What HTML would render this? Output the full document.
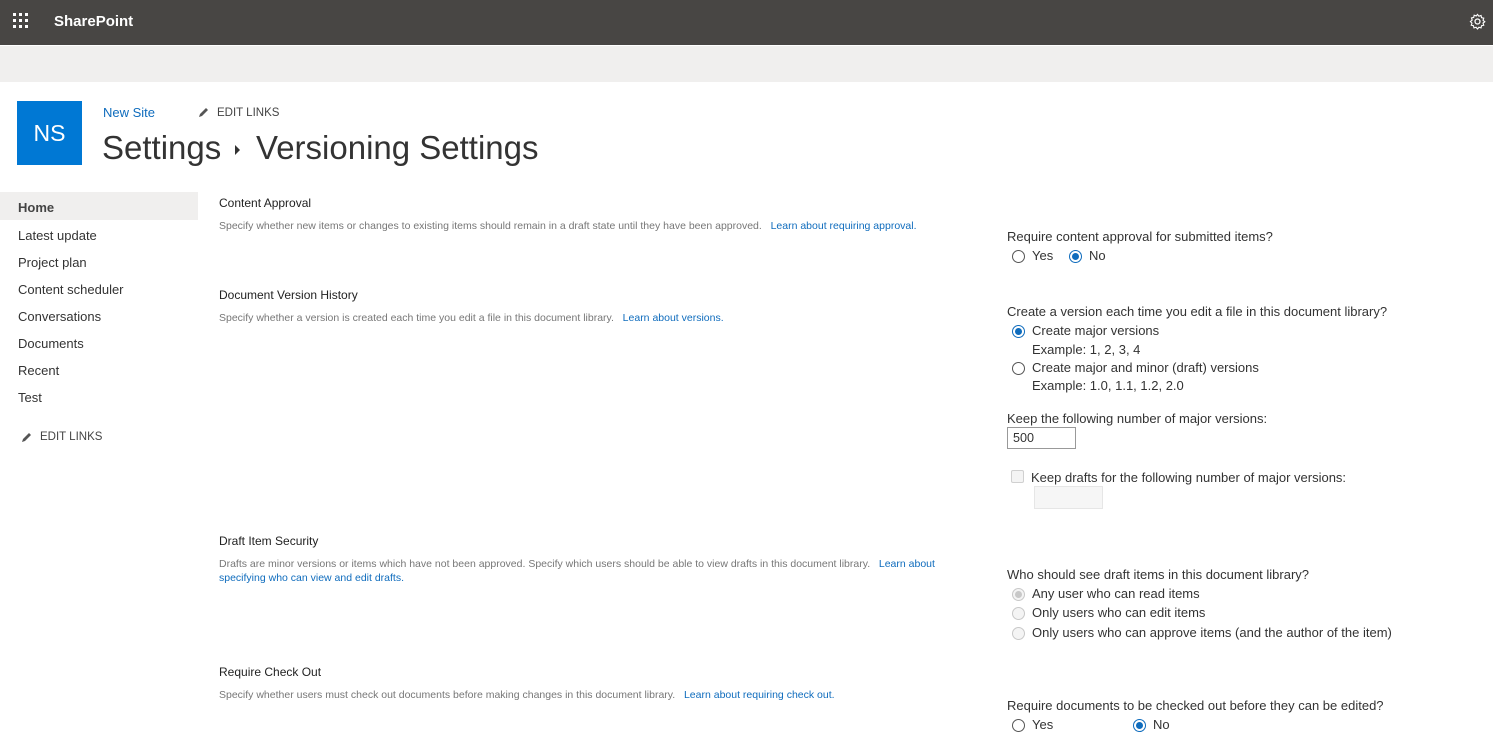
<!DOCTYPE html>
<html><head><meta charset="utf-8"><style>
*{margin:0;padding:0;box-sizing:border-box}
body{width:1493px;height:736px;overflow:hidden;background:#fff;font-family:"Liberation Sans",sans-serif;color:#333;position:relative}
.a{position:absolute;white-space:nowrap}
.top{left:0;top:0;width:1493px;height:45px;background:#484644}
.bar{left:0;top:46px;width:1493px;height:36px;background:#f0efee}
.nav{font-size:13px;color:#333;left:18px}
.h{font-size:12px;color:#222;left:219px}
.d{font-size:10.5px;color:#777;left:219px}
.d span,.l{color:#0f6cbd}
.r{font-size:13px;color:#333}
.rad{position:absolute;width:13px;height:13px;border:1px solid #555;border-radius:50%;background:#fff}
.rad.on{border-color:#0f6cbd}
.rad.on:after{content:"";position:absolute;left:2px;top:2px;width:7px;height:7px;border-radius:50%;background:#0f6cbd}
.rad.dis{border-color:#c8c8c8;background:#f4f4f4}
.rad.dis.on:after{background:#c8c8c8}
</style></head><body>
<div class="a top"></div>
<svg class="a" style="left:13px;top:13px" width="18" height="18"><g fill="#fff"><rect x="0" y="0" width="3" height="3"/><rect x="6" y="0" width="3" height="3"/><rect x="12" y="0" width="3" height="3"/><rect x="0" y="6" width="3" height="3"/><rect x="6" y="6" width="3" height="3"/><rect x="12" y="6" width="3" height="3"/><rect x="0" y="12" width="3" height="3"/><rect x="6" y="12" width="3" height="3"/><rect x="12" y="12" width="3" height="3"/></g></svg>
<div class="a" style="left:54px;top:13px;color:#fff;font-weight:bold;font-size:15px">SharePoint</div>
<svg class="a" style="left:1469px;top:13px" width="17" height="17" viewBox="0 0 24 24"><circle cx="12" cy="12" r="3.5" fill="none" stroke="#fff" stroke-width="1.8"/><path d="M12 2l2 2.5 3-1 .7 3.1 3.1.7-1 3 2.5 2-2.5 2 1 3-3.1.7-.7 3.1-3-1-2 2.5-2-2.5-3 1-.7-3.1-3.1-.7 1-3L2 12l2.5-2-1-3 3.1-.7.7-3.1 3 1z" fill="none" stroke="#fff" stroke-width="1.6"/></svg>
<div class="a bar"></div>
<div class="a" style="left:17px;top:101px;width:65px;height:64px;background:#0078d4;color:#fff;font-size:23px;text-align:center;line-height:64px">NS</div>
<div class="a l" style="left:103px;top:105px;font-size:13px">New Site</div>
<svg class="a" style="left:198px;top:106px" width="12" height="12" viewBox="0 0 12 12"><path d="M1 11l1-3 6-6 2 2-6 6z" fill="#555"/></svg>
<div class="a" style="left:217px;top:107px;font-size:11.5px;color:#444">EDIT LINKS</div>
<div class="a" style="left:102px;top:129px;font-size:33px;color:#333">Settings</div>
<svg class="a" style="left:235px;top:145px" width="6" height="10"><path d="M0 0l5 5-5 5z" fill="#333"/></svg>
<div class="a" style="left:256px;top:129px;font-size:33px;color:#333">Versioning Settings</div>
<div class="a" style="left:0;top:192px;width:198px;height:28px;background:#f0efee"></div>
<div class="a nav" style="top:200px;font-weight:bold;color:#444">Home</div>
<div class="a nav" style="top:228px">Latest update</div>
<div class="a nav" style="top:255px">Project plan</div>
<div class="a nav" style="top:282px">Content scheduler</div>
<div class="a nav" style="top:309px">Conversations</div>
<div class="a nav" style="top:336px">Documents</div>
<div class="a nav" style="top:363px">Recent</div>
<div class="a nav" style="top:390px">Test</div>
<svg class="a" style="left:21px;top:431px" width="12" height="12" viewBox="0 0 12 12"><path d="M1 11l1-3 6-6 2 2-6 6z" fill="#555"/></svg>
<div class="a" style="left:40px;top:431px;font-size:11.5px;color:#444">EDIT LINKS</div>

<div class="a h" style="top:196px">Content Approval</div>
<div class="a d" style="top:220px">Specify whether new items or changes to existing items should remain in a draft state until they have been approved. &nbsp; <span>Learn about requiring approval.</span></div>
<div class="a h" style="top:288px">Document Version History</div>
<div class="a d" style="top:312px">Specify whether a version is created each time you edit a file in this document library. &nbsp; <span>Learn about versions.</span></div>
<div class="a h" style="top:534px">Draft Item Security</div>
<div class="a d" style="top:557px;line-height:14px">Drafts are minor versions or items which have not been approved. Specify which users should be able to view drafts in this document library. &nbsp; <span>Learn about<br>specifying who can view and edit drafts.</span></div>
<div class="a h" style="top:665px">Require Check Out</div>
<div class="a d" style="top:689px">Specify whether users must check out documents before making changes in this document library. &nbsp; <span>Learn about requiring check out.</span></div>

<div class="a r" style="left:1007px;top:229px">Require content approval for submitted items?</div>
<div class="rad" style="left:1012px;top:250px"></div><div class="a r" style="left:1032px;top:248px">Yes</div>
<div class="rad on" style="left:1069px;top:250px"></div><div class="a r" style="left:1089px;top:248px">No</div>

<div class="a r" style="left:1007px;top:304px">Create a version each time you edit a file in this document library?</div>
<div class="rad on" style="left:1012px;top:325px"></div><div class="a r" style="left:1032px;top:323px">Create major versions</div>
<div class="a r" style="left:1032px;top:342px">Example: 1, 2, 3, 4</div>
<div class="rad" style="left:1012px;top:362px"></div><div class="a r" style="left:1032px;top:360px">Create major and minor (draft) versions</div>
<div class="a r" style="left:1032px;top:378px">Example: 1.0, 1.1, 1.2, 2.0</div>
<div class="a r" style="left:1007px;top:411px">Keep the following number of major versions:</div>
<div class="a" style="left:1007px;top:427px;width:69px;height:22px;border:1px solid #999;font-size:12.6px;padding:3px 5px">500</div>
<div class="a" style="left:1011px;top:470px;width:13px;height:13px;border:1px solid #d0d0d0;background:#f4f4f4;border-radius:2px"></div>
<div class="a r" style="left:1031px;top:470px">Keep drafts for the following number of major versions:</div>
<div class="a" style="left:1034px;top:486px;width:69px;height:23px;border:1px solid #e6e6e6;background:#f6f6f6"></div>

<div class="a r" style="left:1007px;top:567px">Who should see draft items in this document library?</div>
<div class="rad dis on" style="left:1012px;top:588px"></div><div class="a r" style="left:1032px;top:586px">Any user who can read items</div>
<div class="rad dis" style="left:1012px;top:607px"></div><div class="a r" style="left:1032px;top:605px">Only users who can edit items</div>
<div class="rad dis" style="left:1012px;top:627px"></div><div class="a r" style="left:1032px;top:625px">Only users who can approve items (and the author of the item)</div>

<div class="a r" style="left:1007px;top:698px">Require documents to be checked out before they can be edited?</div>
<div class="rad" style="left:1012px;top:719px"></div><div class="a r" style="left:1032px;top:717px">Yes</div>
<div class="rad on" style="left:1133px;top:719px"></div><div class="a r" style="left:1153px;top:717px">No</div>
</body></html>
